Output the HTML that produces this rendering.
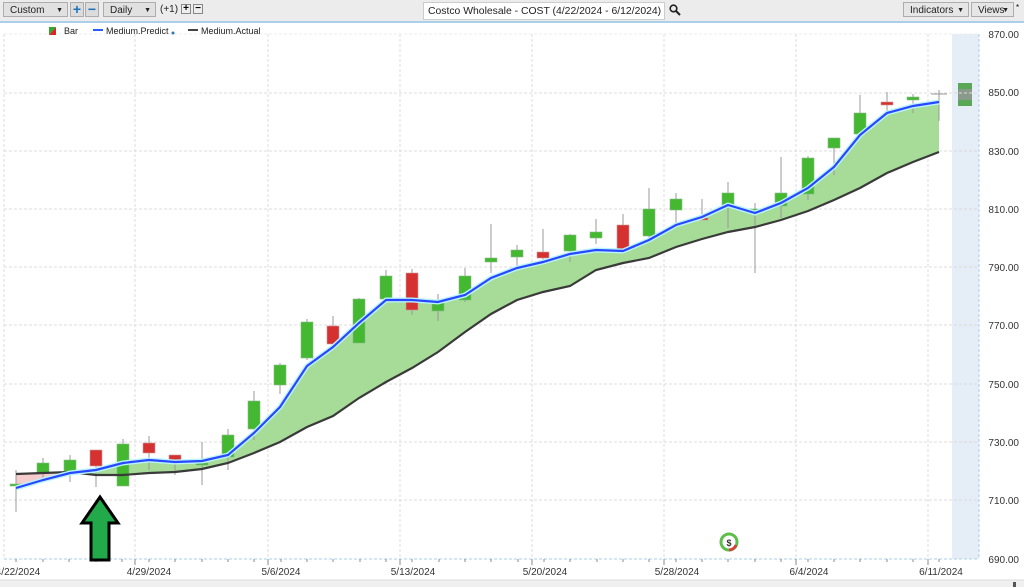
<!DOCTYPE html>
<html><head><meta charset="utf-8"><style>
html,body{margin:0;padding:0;background:#fff;}
body{width:1024px;height:587px;overflow:hidden;position:relative;font-family:"Liberation Sans",sans-serif;}
.tb{position:absolute;left:0;top:0;width:1024px;height:21px;background:#ececec;border-bottom:2px solid #a9cfe9;}
.dd{position:absolute;top:2px;height:15px;border:1px solid #adadad;background:#e1e1e1;font-size:10px;line-height:15px;padding-left:6px;color:#222;box-sizing:border-box;}
.dd b{position:absolute;right:4px;top:0;font-size:7px;}
.bt{position:absolute;top:2px;width:14px;height:15px;border:1px solid #adadad;background:#dcdcdc;box-sizing:border-box;color:#1e73be;font-weight:bold;font-size:14px;line-height:12px;text-align:center;}
.sb{position:absolute;top:4px;width:10px;height:10px;border:1px solid #888;background:#eee;box-sizing:border-box;font-size:10px;line-height:8px;text-align:center;font-weight:bold;color:#000;}
</style></head><body>
<div class="tb">
 <div class="dd" style="left:3px;width:65px">Custom<b>▼</b></div>
 <div class="bt" style="left:70px">+</div>
 <div class="bt" style="left:85px">−</div>
 <div class="dd" style="left:103px;width:53px">Daily<b>▼</b></div>
 <div style="position:absolute;left:160px;top:4px;font-size:10px;color:#222">(+1)</div>
 <div class="sb" style="left:181px">+</div>
 <div class="sb" style="left:193px">−</div>
 <div style="position:absolute;left:423px;top:2px;width:242px;height:18px;background:#fff;border:1px solid #ccc;box-sizing:border-box;font-size:10.4px;line-height:17px;padding-left:4px;color:#222;white-space:nowrap;overflow:hidden">Costco Wholesale - COST (4/22/2024 - 6/12/2024)</div>
 <svg style="position:absolute;left:669px;top:4px" width="12" height="12"><circle cx="4.5" cy="4.5" r="3.3" fill="none" stroke="#222" stroke-width="1.6"/><line x1="7" y1="7" x2="11" y2="11" stroke="#222" stroke-width="2"/></svg>
 <div class="dd" style="left:903px;width:66px;background:#e6e6e6">Indicators<b>▼</b></div>
 <div class="dd" style="left:971px;width:43px;background:#e6e6e6">Views<b>▼</b></div>
 <div style="position:absolute;left:1016px;top:3px;font-size:8px">*</div>
</div>
<svg style="position:absolute;left:0;top:0" width="1024" height="587" font-family="Liberation Sans, sans-serif">
 <rect x="0" y="23" width="1024" height="557" fill="#fff"/>
 <rect x="952" y="34" width="27" height="525" fill="#e5edf6"/>
 <rect x="958" y="83" width="14" height="23" fill="#8a9a8a"/>
 <rect x="958" y="83" width="14" height="6" fill="#58a858"/>
 <rect x="958" y="100" width="14" height="6" fill="#58a858"/>
 <g stroke="#dcdcdc" stroke-dasharray="3,2" stroke-width="1">
  <line x1="4" y1="93" x2="979" y2="93"/><line x1="4" y1="151" x2="979" y2="151"/><line x1="4" y1="209" x2="979" y2="209"/><line x1="4" y1="267" x2="979" y2="267"/><line x1="4" y1="325" x2="979" y2="325"/><line x1="4" y1="384" x2="979" y2="384"/><line x1="4" y1="442" x2="979" y2="442"/><line x1="4" y1="500" x2="979" y2="500"/>
  <line x1="4" y1="34" x2="979" y2="34" stroke="#eee"/>
  <line x1="4" y1="34" x2="4" y2="559"/><line x1="135" y1="34" x2="135" y2="559"/><line x1="268" y1="34" x2="268" y2="559"/><line x1="400" y1="34" x2="400" y2="559"/><line x1="532" y1="34" x2="532" y2="559"/><line x1="664" y1="34" x2="664" y2="559"/><line x1="796" y1="34" x2="796" y2="559"/><line x1="928" y1="34" x2="928" y2="559"/>
 </g>
 <line x1="4" y1="559" x2="979" y2="559" stroke="#a9cfe9" stroke-dasharray="3,2"/>
 <line x1="979" y1="34" x2="979" y2="559" stroke="#a9cfe9" stroke-dasharray="3,2"/>
 <g stroke="#888" stroke-width="1">
  <path d="M16 559v3M43 559v3M69 559v3M96 559v3M122 559v3M149 559v3M175 559v3M202 559v3M228 559v3M254 559v3M281 559v3M307 559v3M333 559v3M360 559v3M386 559v3M412 559v3M439 559v3M465 559v3M491 559v3M518 559v3M544 559v3M570 559v3M597 559v3M623 559v3M649 559v3M676 559v3M702 559v3M728 559v3M755 559v3M781 559v3M808 559v3M834 559v3M860 559v3M887 559v3M913 559v3M939 559v3"/>
  <path d="M135 559v6M268 559v6M400 559v6M532 559v6M664 559v6M796 559v6M928 559v6"/>
 </g>
 <polygon points="49,27 56,27 49,35" fill="#2eaa2e"/><polygon points="56,27 56,35 49,35" fill="#d42a2a"/>
 <text x="64" y="34" font-size="9" fill="#222">Bar</text>
 <line x1="93" y1="30" x2="103" y2="30" stroke="#2a5cff" stroke-width="2"/>
 <text x="106" y="34" font-size="9" fill="#222">Medium.Predict</text>
 <circle cx="173" cy="33" r="1.5" fill="#2b7bb0"/>
 <line x1="188" y1="30" x2="198" y2="30" stroke="#444" stroke-width="2"/>
 <text x="201" y="34" font-size="9" fill="#222">Medium.Actual</text>
 <polygon fill="#f5cccc" points="16,488 43,480 60,475 60,473 43,473 16,474"/>
 <polygon fill="#a6dc98" points="60,475 70,473 96,470 123,463 149,460 175,462 202,461 228,455 254,433 280,407 307,366 333,347 359,323 386,300 412,300 438,302 465,295 491,278 517,268 543,262 570,254 596,250 623,251 649,240 676,225 702,217 728,205 755,213 781,203 808,188 834,167 860,135 887,113 913,106 939,102 939,152 913,162 887,173 860,188 834,200 808,211 781,220 755,227 728,232 702,239 676,247 649,258 623,263 596,270 570,286 543,292 517,300 491,314 465,332 438,352 412,368 386,382 359,398 333,416 307,427 280,442 254,453 228,463 202,469 175,472 149,473 123,475 96,475 70,472 60,473"/>
 <g stroke="#999" stroke-width="1">
  <path d="M16 470v42M43 458v20M70 455v27M96 450v37M123 439v47M149 436v34M175 455v20M202 442v43M228 429v41M254 391v49M280 363v31M307 319v41M333 316v34M359 298v45M386 270v30M412 269v46M438 294v27M465 268v34M491 224v49M517 245v22M543 229v31M570 234v28M596 219v25M623 214v37M649 188v52M676 193v32M702 199v21M728 182v46M755 203v70M781 157v61M808 156v44M834 138v37M860 95v42M887 92v21M913 94v19M939 90v31"/>
  <path d="M931 94h16"/>
 </g>
 <g fill="#44b830" stroke="#8ab88a" stroke-width="0.6">
  <rect x="10" y="484" width="12" height="2"/>
  <rect x="37" y="463" width="12" height="10"/><rect x="64" y="460" width="12" height="13"/>
  <rect x="117" y="444" width="12" height="42"/><rect x="196" y="463" width="12" height="2"/>
  <rect x="222" y="435" width="12" height="22"/><rect x="248" y="401" width="12" height="28"/>
  <rect x="274" y="365" width="12" height="20"/><rect x="301" y="322" width="12" height="36"/>
  <rect x="353" y="299" width="12" height="44"/><rect x="380" y="276" width="12" height="23"/>
  <rect x="432" y="302" width="12" height="9"/><rect x="459" y="276" width="12" height="24"/>
  <rect x="485" y="258" width="12" height="4"/><rect x="511" y="250" width="12" height="7"/>
  <rect x="564" y="235" width="12" height="16"/><rect x="590" y="232" width="12" height="6"/>
  <rect x="643" y="209" width="12" height="27"/><rect x="670" y="199" width="12" height="11"/>
  <rect x="722" y="193" width="12" height="14"/><rect x="749" y="209" width="12" height="3"/>
  <rect x="775" y="193" width="12" height="13"/><rect x="802" y="158" width="12" height="36"/>
  <rect x="828" y="138" width="12" height="10"/><rect x="854" y="113" width="12" height="21"/>
  <rect x="907" y="97" width="12" height="3"/>
 </g>
 <g fill="#d63131" stroke="#c99" stroke-width="0.6">
  <rect x="90" y="450" width="12" height="16"/><rect x="143" y="443" width="12" height="10"/>
  <rect x="169" y="455" width="12" height="8"/><rect x="327" y="326" width="12" height="18"/>
  <rect x="406" y="273" width="12" height="37"/><rect x="537" y="252" width="12" height="6"/>
  <rect x="617" y="225" width="12" height="24"/><rect x="696" y="218" width="12" height="2"/>
  <rect x="881" y="102" width="12" height="3"/>
 </g>
 <polyline fill="none" stroke="#3a3a3a" stroke-width="2.2" points="16,474 43,473 70,472 96,475 123,475 149,473 175,472 202,469 228,463 254,453 280,442 307,427 333,416 359,398 386,382 412,368 438,352 465,332 491,314 517,300 543,292 570,286 596,270 623,263 649,258 676,247 702,239 728,232 755,227 781,220 808,211 834,200 860,188 887,173 913,162 939,152"/>
 <polyline fill="none" stroke="#b8f4ff" stroke-width="5" points="16,488 43,480 70,473 96,470 123,463 149,460 175,462 202,461 228,455 254,433 280,407 307,366 333,347 359,323 386,300 412,300 438,302 465,295 491,278 517,268 543,262 570,254 596,250 623,251 649,240 676,225 702,217 728,205 755,213 781,203 808,188 834,167 860,135 887,113 913,106 939,102"/>
 <polyline fill="none" stroke="#2a47ff" stroke-width="2.2" points="16,488 43,480 70,473 96,470 123,463 149,460 175,462 202,461 228,455 254,433 280,407 307,366 333,347 359,323 386,300 412,300 438,302 465,295 491,278 517,268 543,262 570,254 596,250 623,251 649,240 676,225 702,217 728,205 755,213 781,203 808,188 834,167 860,135 887,113 913,106 939,102"/>
 <polygon points="100,497 118,523 109,523 109,560 91,560 91,523 82,523" fill="#22a94a" stroke="#000" stroke-width="3" stroke-linejoin="miter"/>
 <circle cx="729" cy="542" r="8" fill="none" stroke="#5cbf4a" stroke-width="3"/>
 <path d="M736 545 A8 8 0 0 1 729 550" fill="none" stroke="#d84040" stroke-width="3"/>
 <circle cx="729" cy="542" r="6" fill="#fff"/>
 <text x="729" y="546" font-size="9" font-weight="bold" text-anchor="middle" fill="#333">$</text>
 <g font-size="10" fill="#333" text-anchor="end">
  <text x="1019" y="38">870.00</text><text x="1019" y="96">850.00</text><text x="1019" y="155">830.00</text><text x="1019" y="213">810.00</text><text x="1019" y="271">790.00</text><text x="1019" y="329">770.00</text><text x="1019" y="388">750.00</text><text x="1019" y="446">730.00</text><text x="1019" y="504">710.00</text><text x="1019" y="563">690.00</text>
 </g>
 <g font-size="10" fill="#333" text-anchor="middle">
  <text x="18" y="575">4/22/2024</text><text x="149" y="575">4/29/2024</text><text x="281" y="575">5/6/2024</text><text x="413" y="575">5/13/2024</text><text x="545" y="575">5/20/2024</text><text x="677" y="575">5/28/2024</text><text x="809" y="575">6/4/2024</text><text x="941" y="575">6/11/2024</text>
 </g>
 <rect x="0" y="580" width="1024" height="7" fill="#f0f0f0"/>
 <line x1="0" y1="580" x2="1024" y2="580" stroke="#ddd"/>
 <rect x="1013" y="582" width="3" height="5" fill="#555"/>
</svg>
</body></html>
